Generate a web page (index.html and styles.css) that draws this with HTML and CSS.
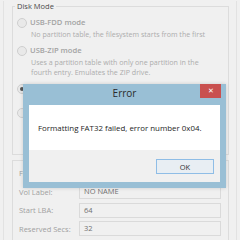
FILE: index.html
```html
<!DOCTYPE html>
<html lang="en">
<head>
    <meta charset="UTF-8">
    <title>Disk Mode</title>
    <link rel="stylesheet" href="styles.css">
</head>
<body>
    <div class="screen">
        <div class="panel">
            <fieldset class="group disk-mode">
                <legend>Disk Mode</legend>
                <div class="option">
                    <span class="radio"></span>
                    <div class="option-text">
                        <div class="option-title">USB-FDD mode</div>
                        <div class="option-desc">No partition table, the filesystem starts from the first</div>
                    </div>
                </div>
                <div class="option">
                    <span class="radio"></span>
                    <div class="option-text">
                        <div class="option-title">USB-ZIP mode</div>
                        <div class="option-desc">Uses a partition table with only one partition in the<br>fourth entry. Emulates the ZIP drive.</div>
                    </div>
                </div>
                <div class="option single">
                    <span class="radio checked"></span>
                    <div class="option-text">
                        <div class="option-title">USB-HDD mode (Single Partition)</div>
                    </div>
                </div>
                <div class="option">
                    <span class="radio"></span>
                </div>
            </fieldset>
            <fieldset class="group params">
                <div class="field"><label>File System:</label><div class="input"></div></div>
                <div class="field"><label>Vol Label:</label><div class="input">NO NAME</div></div>
                <div class="field"><label>Start LBA:</label><div class="input">64</div></div>
                <div class="field"><label>Reserved Secs:</label><div class="input">32</div></div>
            </fieldset>
        </div>

        <div class="dialog">
            <div class="dialog-title">
                <span>Error</span>
                <span class="close">&#x2715;</span>
            </div>
            <div class="dialog-body">
                <p>Formatting FAT32 failed, error number 0x04.</p>
            </div>
            <div class="dialog-footer">
                <button class="ok">OK</button>
            </div>
        </div>
    </div>
</body>
</html>
```

FILE: styles.css
```css
body {
    margin: 0;
    padding: 0;
    background-color: #f0f0f0;
    font-family: "Open Sans", "Noto Sans", sans-serif;
}
.screen {
    position: relative;
    width: 240px;
    height: 240px;
    overflow: hidden;
    background-color: #f0f0f0;
}
.panel {
    height: 240px;
    margin: 0 3px;
    padding: 0 7px 0 8px;
    border-left: 1px solid #e2e2e2;
    border-right: 1px solid #e2e2e2;
}
.group {
    margin: 0;
    padding: 0;
    border: 1px solid #dcdcdc;
    min-width: 0;
}
.group legend {
    margin-left: 2px;
    padding: 0 2px;
    font-size: 7.5px;
    line-height: 10px;
    color: #4a4a4a;
}
.disk-mode {
    margin-top: 1px;
    height: 146px;
    padding-top: 6px;
}
.option {
    display: flex;
    gap: 3px;
    padding-left: 4px;
    margin-bottom: 6px;
}
.option.single {
    margin-bottom: 13px;
}
.radio {
    flex: none;
    width: 8px;
    height: 8px;
    margin-top: 1px;
    border: 1px solid #cfcfcf;
    border-radius: 50%;
    background-color: #e9e9e9;
    position: relative;
}
.radio.checked::after {
    content: "";
    position: absolute;
    left: 2px;
    top: 2px;
    width: 4px;
    height: 4px;
    border-radius: 50%;
    background-color: #555;
}
.option-title {
    font-size: 7.6px;
    line-height: 10px;
    font-weight: 600;
    color: #a3a3a3;
}
.option-desc {
    margin-top: 2px;
    padding-left: 1px;
    font-size: 7.1px;
    line-height: 10px;
    color: #acacac;
}
.params {
    margin-top: 5px;
    height: 100px;
    padding: 3px 0 0 6px;
}
.field {
    display: flex;
    align-items: center;
    height: 18.5px;
}
.field label {
    width: 60px;
    font-size: 7.5px;
    color: #a0a0a0;
}
.field .input {
    width: 136px;
    height: 13px;
    padding-left: 4px;
    border: 1px solid #dadada;
    background-color: #f0f0f0;
    font-size: 7.5px;
    line-height: 13px;
    color: #707070;
}

/* error message box */
.dialog {
    position: absolute;
    left: 23px;
    top: 84px;
    width: 191px;
    border: 6px solid #99bfd5;
    border-top: none;
    box-shadow: 0 0 4px rgba(0, 0, 0, 0.15);
}
.dialog-title {
    position: relative;
    height: 21px;
    margin: 0 -6px;
    background-color: #99bfd5;
    text-align: center;
    font-size: 10px;
    line-height: 19px;
    color: #2a2a2a;
}
.close {
    position: absolute;
    right: 5px;
    top: 0;
    width: 21px;
    height: 14px;
    background-color: #c9504f;
    color: #fff;
    font-size: 7px;
    line-height: 14px;
}
.dialog-body {
    height: 45px;
    background-color: #fff;
}
.dialog-body p {
    margin: 0;
    padding: 18px 0 0 9px;
    font-size: 7.9px;
    line-height: 10px;
    color: #1e1e1e;
}
.dialog-footer {
    display: flex;
    justify-content: flex-end;
    height: 32px;
    padding: 9px 6px 0 0;
    box-sizing: border-box;
    background-color: #f0f0f0;
}
.ok {
    width: 58px;
    height: 15px;
    padding: 0;
    border: 1px solid #8fbde6;
    background-color: #e8eef3;
    font-family: inherit;
    font-size: 7.5px;
    color: #333;
}
```
